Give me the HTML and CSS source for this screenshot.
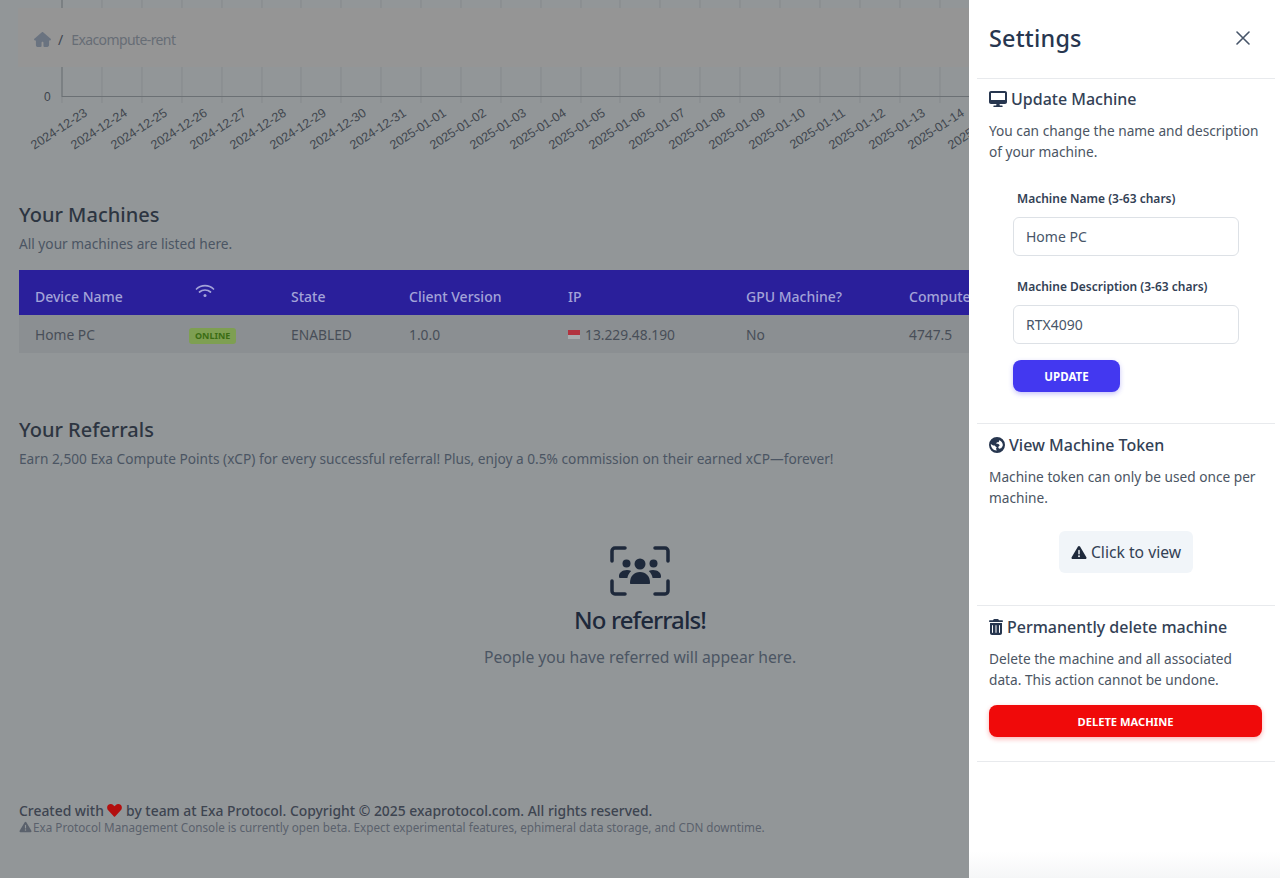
FILE: index.html
```html
<!DOCTYPE html>
<html lang="en">
<head>
    <meta charset="UTF-8">
    <meta name="viewport" content="width=device-width, initial-scale=1.0">
    <title>Exacompute-rent</title>
    <link rel="stylesheet" href="styles.css">
</head>
<body>

    <main class="page">
        <!-- Chart, scrolled so only its bottom shows -->
        <svg class="chart" width="1280" height="160" viewBox="0 0 1280 160">
            <g class="chartGrid">
                <path d="M62 0V103M102 0V103M142 0V103M182 0V103M222 0V103M262 0V103M301 0V103M341 0V103M381 0V103M421 0V103M461 0V103M501 0V103M541 0V103M581 0V103M620 0V103M660 0V103M700 0V103M740 0V103M780 0V103M820 0V103M860 0V103M900 0V103M940 0V103"/>
            </g>
            <path class="chartAxis" d="M62 96.5H970M62 0V97"/>
            <text class="chartZero" x="44" y="101">0</text>
            <g class="chartLabels">
                <text transform="translate(88 115) rotate(-33)" text-anchor="end">2024-12-23</text>
                <text transform="translate(128 115) rotate(-33)" text-anchor="end">2024-12-24</text>
                <text transform="translate(168 115) rotate(-33)" text-anchor="end">2024-12-25</text>
                <text transform="translate(208 115) rotate(-33)" text-anchor="end">2024-12-26</text>
                <text transform="translate(247 115) rotate(-33)" text-anchor="end">2024-12-27</text>
                <text transform="translate(287 115) rotate(-33)" text-anchor="end">2024-12-28</text>
                <text transform="translate(327 115) rotate(-33)" text-anchor="end">2024-12-29</text>
                <text transform="translate(367 115) rotate(-33)" text-anchor="end">2024-12-30</text>
                <text transform="translate(407 115) rotate(-33)" text-anchor="end">2024-12-31</text>
                <text transform="translate(447 115) rotate(-33)" text-anchor="end">2025-01-01</text>
                <text transform="translate(487 115) rotate(-33)" text-anchor="end">2025-01-02</text>
                <text transform="translate(527 115) rotate(-33)" text-anchor="end">2025-01-03</text>
                <text transform="translate(567 115) rotate(-33)" text-anchor="end">2025-01-04</text>
                <text transform="translate(606 115) rotate(-33)" text-anchor="end">2025-01-05</text>
                <text transform="translate(646 115) rotate(-33)" text-anchor="end">2025-01-06</text>
                <text transform="translate(686 115) rotate(-33)" text-anchor="end">2025-01-07</text>
                <text transform="translate(726 115) rotate(-33)" text-anchor="end">2025-01-08</text>
                <text transform="translate(766 115) rotate(-33)" text-anchor="end">2025-01-09</text>
                <text transform="translate(806 115) rotate(-33)" text-anchor="end">2025-01-10</text>
                <text transform="translate(846 115) rotate(-33)" text-anchor="end">2025-01-11</text>
                <text transform="translate(886 115) rotate(-33)" text-anchor="end">2025-01-12</text>
                <text transform="translate(926 115) rotate(-33)" text-anchor="end">2025-01-13</text>
                <text transform="translate(965 115) rotate(-33)" text-anchor="end">2025-01-14</text>
                <text transform="translate(1005 115) rotate(-33)" text-anchor="end">2025-01-15</text>
            </g>
        </svg>

        <!-- Breadcrumb sticks over the chart -->
        <nav class="crumbBar">
            <svg class="crumbHome" width="17" height="15" viewBox="0 0 576 512"><path d="M575.8 255.5c0 18-15 32.1-32 32.1h-32l.7 160.2c0 35.3-28.7 64-64 64H352c-17.7 0-32-14.3-32-32V368c0-17.7-14.3-32-32-32s-32 14.3-32 32v112c0 17.7-14.3 32-32 32H128.1c-35.3 0-64-28.7-64-64V287.600H32c-18 0-32-14-32-32.100 0-9 3-17 10-24L266.400 8c7-7 15-8 22-8s15 2 21 7l255.400 224.500c8 7 12 15 11 24z"/></svg>
            <span class="crumbSep">/</span>
            <span class="crumbName">Exacompute-rent</span>
        </nav>

        <section class="machines">
            <h2 class="sectionTitle">Your Machines</h2>
            <p class="sectionText">All your machines are listed here.</p>
            <table class="machineTable">
                <colgroup>
                    <col class="colName"><col class="colStatus"><col class="colState"><col class="colClient"><col class="colIp"><col class="colGpu"><col class="colCompute">
                </colgroup>
                <thead>
                    <tr>
                        <th>Device Name</th>
                        <th class="wifiHead">
                            <svg width="20" height="16" viewBox="0 0 20 16" fill="none" stroke="currentColor" stroke-width="1.700" stroke-linecap="round"><path d="M1.500 6C6 1.500 14 1.500 18.500 6M4.500 9C7.500 6.300 12.500 6.300 15.500 9"/><circle cx="10" cy="12.500" r="1.500" fill="currentColor" stroke="none"/></svg>
                        </th>
                        <th>State</th>
                        <th>Client Version</th>
                        <th>IP</th>
                        <th>GPU Machine?</th>
                        <th>Compute</th>
                    </tr>
                </thead>
                <tbody>
                    <tr>
                        <td>Home PC</td>
                        <td><span class="onlineBadge">ONLINE</span></td>
                        <td>ENABLED</td>
                        <td>1.0.0</td>
                        <td><span class="flag"></span>13.229.48.190</td>
                        <td>No</td>
                        <td>4747.5</td>
                    </tr>
                </tbody>
            </table>
        </section>

        <section class="referrals">
            <h2 class="sectionTitle">Your Referrals</h2>
            <p class="sectionText">Earn 2,500 Exa Compute Points (xCP) for every successful referral! Plus, enjoy a 0.5% commission on their earned xCP—forever!</p>
            <div class="emptyState">
                <svg class="emptyIcon" width="60" height="50" viewBox="0 0 60 50" fill="#1e293b">
                    <path d="M2 15V5a3 3 0 0 1 3-3h10M45 2h10a3 3 0 0 1 3 3v10M58 35v10a3 3 0 0 1-3 3H45M15 48H5a3 3 0 0 1-3-3V35" fill="none" stroke="#1e293b" stroke-width="3.500" stroke-linecap="round"/>
                    <circle cx="30" cy="18" r="5.500"/><circle cx="16.500" cy="17.500" r="4"/><circle cx="43.500" cy="17.500" r="4"/>
                    <path d="M20 37c0-7 4-11 10-11s10 4 10 11c0 .6-.4 1-1 1H21c-.6 0-1-.4-1-1z"/>
                    <path d="M9 30c0-3 3-6 8-6 1.500 0 3 .3 4.200 1-2 2-3.400 4.400-3.800 7H10c-.6 0-1-.6-1-2zM51 30c0-3-3-6-8-6-1.500 0-3 .3-4.200 1 2 2 3.400 4.400 3.800 7H50c.6 0 1-.6 1-2z"/>
                </svg>
                <h3 class="emptyTitle">No referrals!</h3>
                <p class="emptyText">People you have referred will appear here.</p>
            </div>
        </section>

        <footer class="pageFoot">
            <p class="footLine">Created with
                <svg class="footHeart" width="15" height="13" viewBox="0 0 512 448"><path d="M47.600 28.600C98-15 172-6 219 42l37 38 37-38c47-48 121-57 171.400-13.400 57 49 60 137 9 190L268 437c-7 7-17 7-24 0L38.600 218.600c-51-53-48-141 9-190z"/></svg>
                by team at Exa Protocol. Copyright © 2025 exaprotocol.com. All rights reserved.</p>
            <p class="footNote">
                <svg class="footWarn" width="13" height="12" viewBox="0 0 512 512"><path d="M256 32c14 0 27 8 35 20l216 368c8 13 8 29 0 42s-21 18-35 18H40c-14 0-27-7-35-18s-8-29 0-42L221 52c8-12 21-20 35-20zm0 128c-13 0-24 11-24 24v112c0 13 11 24 24 24s24-11 24-24V184c0-13-11-24-24-24zm32 224a32 32 0 1 0-64 0 32 32 0 1 0 64 0z"/></svg>
                Exa Protocol Management Console is currently open beta. Expect experimental features, ephimeral data storage, and CDN downtime.</p>
        </footer>
    </main>

    <!-- Settings drawer -->
    <aside class="drawer">
        <header class="drawerHead">
            <h2 class="drawerTitle">Settings</h2>
            <svg class="drawerClose" width="14" height="14" viewBox="0 0 14 14" fill="none" stroke="#475569" stroke-width="1.600" stroke-linecap="round"><path d="M1 1L13 13M13 1L1 13"/></svg>
        </header>

        <section class="panel">
            <h3 class="panelTitle">
                <svg class="panelIcon" width="18" height="16" viewBox="0 0 576 512" fill="#27364f"><path d="M64 0C29 0 0 29 0 64v288c0 35 29 64 64 64h176l-11 48h-69c-13 0-24 11-24 24s11 24 24 24h256c13 0 24-11 24-24s-11-24-24-24h-69l-11-48h176c35 0 64-29 64-64V64c0-35-29-64-64-64H64zm448 64v224H64V64h448z"/></svg>
                Update Machine</h3>
            <p class="panelText">You can change the name and description of your machine.</p>
            <form class="machineForm">
                <label class="fieldLabel" for="machineName">Machine Name (3-63 chars)</label>
                <input class="fieldInput" type="text" id="machineName" value="Home PC">
                <label class="fieldLabel" for="machineDesc">Machine Description (3-63 chars)</label>
                <input class="fieldInput" type="text" id="machineDesc" value="RTX4090">
                <button class="updateBtn" type="button">UPDATE</button>
            </form>
        </section>

        <section class="panel tokenPanel">
            <h3 class="panelTitle">
                <svg class="panelIcon" width="16" height="16" viewBox="0 0 512 512" fill="#27364f"><path d="M256 0a256 256 0 1 0 0 512 256 256 0 1 0 0-512zM57 224l63 42c8 5 17 8 27 8h21c8 0 16 3 22 9l28 28c6 6 14 9 22 9h10l-20 40c-5 10-5 22 0 32l18 36c-5 0-11 1-16 1C132 429 62 338 57 224zm384 58l-40 58c-7 10-17 18-29 22l-30 10c-12 4-24-1-30-11l-14-24c-5-9-4-20 3-27l33-33c10-10 8-26-3-33l-31-21c-8-5-17-8-27-8h-28c-11 0-17-13-10-21l12-14c5-6 12-9 20-9h25c12 0 22-9 24-21l5-27c2-11 13-18 24-15 55 24 94 79 96 143 0 11-2 21-4 32z"/></svg>
                View Machine Token</h3>
            <p class="panelText">Machine token can only be used once per machine.</p>
            <button class="tokenBtn" type="button">
                <svg width="16" height="15" viewBox="0 0 512 512" fill="#1e293b"><path d="M256 32c14 0 27 8 35 20l216 368c8 13 8 29 0 42s-21 18-35 18H40c-14 0-27-7-35-18s-8-29 0-42L221 52c8-12 21-20 35-20zm0 128c-13 0-24 11-24 24v112c0 13 11 24 24 24s24-11 24-24V184c0-13-11-24-24-24zm32 224a32 32 0 1 0-64 0 32 32 0 1 0 64 0z"/></svg>
                Click to view</button>
        </section>

        <section class="panel deletePanel">
            <h3 class="panelTitle">
                <svg class="panelIcon" width="14" height="16" viewBox="0 0 448 512" fill="#27364f"><path d="M170 0c-12 0-23 7-29 18l-13 22H32C14 40 0 54 0 72s14 24 32 24h384c18 0 32-6 32-24s-14-32-32-32h-96l-13-22c-6-11-17-18-29-18H170zM32 128v320c0 35 29 64 64 64h256c35 0 64-29 64-64V128H32zm80 64c9 0 16 7 16 16v224c0 9-7 16-16 16s-16-7-16-16V208c0-9 7-16 16-16zm112 0c9 0 16 7 16 16v224c0 9-7 16-16 16s-16-7-16-16V208c0-9 7-16 16-16zm112 0c9 0 16 7 16 16v224c0 9-7 16-16 16s-16-7-16-16V208c0-9 7-16 16-16z"/></svg>
                Permanently delete machine</h3>
            <p class="panelText">Delete the machine and all associated data. This action cannot be undone.</p>
            <button class="deleteBtn" type="button">DELETE MACHINE</button>
        </section>
    </aside>

</body>
</html>
```

FILE: styles.css
```css
* {
    box-sizing: border-box;
}

html, body {
    height: 100%;
}

body {
    margin: 0;
    overflow: hidden;
    background-color: #929698;
    font-family: "Noto Sans", "Open Sans", sans-serif;
    color: #1e293b;
}

h2, h3, p {
    margin: 0;
}

.page {
    position: relative;
    height: 878px;
    overflow: hidden;
}

/* Chart */
.chart {
    display: block;
}

.chartGrid path {
    fill: none;
    stroke: #85898c;
    stroke-width: 1;
}

.chartAxis {
    fill: none;
    stroke: #6b7074;
    stroke-width: 1;
}

.chartZero {
    font-family: "Liberation Sans", sans-serif;
    font-size: 12px;
    fill: #3d434b;
}

.chartLabels text {
    font-family: "Liberation Sans", sans-serif;
    font-size: 12.500px;
    fill: #41474f;
}

/* Breadcrumb */
.crumbBar {
    position: absolute;
    top: 8px;
    left: 18px;
    right: 20px;
    height: 59px;
    display: flex;
    align-items: center;
    padding: 3px 0 0 16px;
    background-color: #959595;
    font-size: 14px;
    color: #676d75;
}

.crumbHome {
    fill: #6a7380;
}

.crumbSep {
    margin: 0 8px 0 7px;
    color: #3f4650;
}

.crumbName {
    letter-spacing: -0.6px;
}

/* Sections */
.machines {
    margin-top: 40px;
    padding-left: 19px;
}

.sectionTitle {
    font-size: 20px;
    font-weight: 500;
    line-height: 30px;
    color: #2d3541;
}

.sectionText {
    margin-top: 3px;
    font-size: 13.700px;
    line-height: 21px;
    color: #4b5563;
}

/* Machine table */
.machineTable {
    margin-top: 16px;
    width: 1241px;
    table-layout: fixed;
    border-collapse: collapse;
    font-size: 13.800px;
}

.colName { width: 160px; }
.colStatus { width: 96px; }
.colState { width: 118px; }
.colClient { width: 159px; }
.colIp { width: 178px; }
.colGpu { width: 163px; }

.machineTable th {
    height: 45px;
    padding: 8px 16px 0;
    text-align: left;
    font-size: 14px;
    font-weight: 500;
    background-color: #2a1f9b;
    color: #a3a3d8;
}

.machineTable .wifiHead {
    padding-bottom: 8px;
    vertical-align: top;
    padding-top: 13px;
}

.machineTable td {
    height: 38px;
    padding: 0 16px;
    background-color: #8b8f92;
    color: #484e58;
}

.onlineBadge {
    display: inline-block;
    margin-left: -6px;
    padding: 0 6px;
    border-radius: 3px;
    background-color: #7e9f52;
    color: #3b6d14;
    font-size: 9px;
    font-weight: 700;
    line-height: 16px;
    vertical-align: middle;
}

.flag {
    display: inline-block;
    width: 12px;
    height: 9px;
    margin-right: 5px;
    background: linear-gradient(#b2333f 50%, #a9acae 50%);
    vertical-align: 1px;
}

/* Referrals */
.referrals {
    margin-top: 62px;
    padding-left: 19px;
}

.emptyState {
    display: flex;
    flex-direction: column;
    align-items: center;
    margin-top: 77px;
    padding-right: 19px;
}

.emptyIcon {
    display: block;
}

.emptyTitle {
    margin-top: 5px;
    font-size: 24px;
    font-weight: 500;
    line-height: 38px;
    letter-spacing: -0.9px;
    color: #1e293b;
}

.emptyText {
    margin-top: 6px;
    font-size: 15.700px;
    line-height: 25px;
    color: #4b5563;
}

/* Footer */
.pageFoot {
    margin-top: 131px;
    padding-left: 19px;
}

.footLine {
    font-size: 13.900px;
    font-weight: 500;
    line-height: 19px;
    color: #3d4450;
}

.footHeart {
    fill: #b30f0f;
    vertical-align: -1px;
}

.footNote {
    font-size: 11.700px;
    line-height: 15px;
    color: #5a616c;
}

.footWarn {
    margin-right: -2px;
    fill: #5a616c;
    vertical-align: -1px;
}

/* Drawer */
.drawer {
    position: absolute;
    top: 0;
    right: 0;
    bottom: 0;
    width: 311px;
    padding: 0 5px 0 8px;
    background: linear-gradient(#fff 97%, #f5f6f7);
}

.drawerHead {
    display: flex;
    justify-content: space-between;
    align-items: center;
    height: 79px;
    padding: 0 25px 3px 12px;
    border-bottom: 1px solid #e8eaed;
}

.drawerTitle {
    font-size: 23.400px;
    font-weight: 500;
    letter-spacing: 0.2px;
    color: #27364f;
}

.panel {
    padding: 9px 12px 0;
    border-bottom: 1px solid #e8eaed;
}

.panelTitle {
    display: flex;
    align-items: center;
    gap: 4px;
    font-size: 16px;
    font-weight: 500;
    line-height: 22px;
    color: #334155;
}

.panelText {
    margin-top: 10px;
    font-size: 13.700px;
    line-height: 21px;
    color: #4b5563;
}

/* Update form */
.machineForm {
    display: flex;
    flex-direction: column;
    align-items: flex-start;
    padding: 28px 0 31px 24px;
}

.fieldLabel {
    margin-left: 4px;
    font-size: 12px;
    font-weight: 600;
    line-height: 18px;
    color: #334155;
}

.fieldInput {
    width: 226px;
    height: 39px;
    margin: 9px 0 22px;
    padding: 0 12px;
    border: 1px solid #dde1e6;
    border-radius: 6px;
    font-family: inherit;
    font-size: 14px;
    color: #475569;
}

.updateBtn {
    width: 107px;
    height: 32px;
    margin-top: -6px;
    border: 0;
    border-radius: 8px;
    background-color: #4338f0;
    color: white;
    font-family: inherit;
    font-size: 11.500px;
    font-weight: 700;
    box-shadow: 0 2px 5px rgba(67, 56, 240, 0.3);
}

/* Token */
.tokenPanel {
    height: 182px;
    padding-top: 10px;
}

.tokenBtn {
    display: flex;
    align-items: center;
    gap: 4px;
    height: 42px;
    margin: 23px auto 0;
    padding: 0 12px;
    border: 0;
    border-radius: 6px;
    background-color: #f1f5f9;
    color: #334155;
    font-family: inherit;
    font-size: 15.700px;
}

/* Delete */
.deletePanel {
    height: 156px;
    padding-top: 10px;
}

.deletePanel .panelText {
    margin-top: 10px;
}

.deleteBtn {
    display: block;
    width: 273px;
    height: 32px;
    margin-top: 15px;
    border: 0;
    border-radius: 8px;
    background-color: #f00a0a;
    color: white;
    font-family: inherit;
    font-size: 11.200px;
    font-weight: 700;
    box-shadow: 0 2px 5px rgba(240, 10, 10, 0.3);
}
```
